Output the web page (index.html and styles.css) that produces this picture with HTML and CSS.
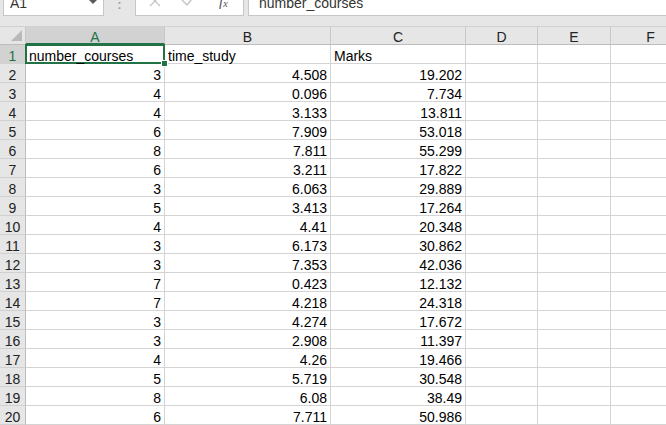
FILE: index.html
```html
<!DOCTYPE html>
<html>
<head>
<meta charset="utf-8">
<link rel="stylesheet" href="styles.css">
</head>
<body>
<div class="toolbar">
  <div class="namebox"><span class="nb-text">A1</span><span class="nb-arrow"></span></div>
  <div class="dots">:</div>
  <div class="btnbox">
    <svg class="ic ic-x" width="14" height="14" viewBox="0 0 14 14"><path d="M2 1 L12 11 M12 1 L2 11" stroke="#c4c4c4" stroke-width="1.3" fill="none"/></svg>
    <svg class="ic ic-ok" width="18" height="14" viewBox="0 0 18 14"><path d="M2 5 L7 10 L16 -1" stroke="#c4c4c4" stroke-width="1.5" fill="none"/></svg>
    <span class="fx">f<sub>x</sub></span>
  </div>
  <div class="formula"><span class="f-text">number_courses</span></div>
</div>
<div class="sheet">
  <div class="corner"><span class="tri"></span></div>
  <div class="ch sel">A</div>
  <div class="ch">B</div>
  <div class="ch">C</div>
  <div class="ch">D</div>
  <div class="ch">E</div>
  <div class="ch">F</div>

  <div class="rh sel">1</div>
  <div class="c t a1"><span class="selbox"><span class="handle"></span></span><span class="above">number_courses</span></div>
  <div class="c t">time_study</div>
  <div class="c t">Marks</div>
  <div class="c"></div><div class="c"></div><div class="c"></div>

  <div class="rh">2</div><div class="c">3</div><div class="c">4.508</div><div class="c">19.202</div><div class="c"></div><div class="c"></div><div class="c"></div>
  <div class="rh">3</div><div class="c">4</div><div class="c">0.096</div><div class="c">7.734</div><div class="c"></div><div class="c"></div><div class="c"></div>
  <div class="rh">4</div><div class="c">4</div><div class="c">3.133</div><div class="c">13.811</div><div class="c"></div><div class="c"></div><div class="c"></div>
  <div class="rh">5</div><div class="c">6</div><div class="c">7.909</div><div class="c">53.018</div><div class="c"></div><div class="c"></div><div class="c"></div>
  <div class="rh">6</div><div class="c">8</div><div class="c">7.811</div><div class="c">55.299</div><div class="c"></div><div class="c"></div><div class="c"></div>
  <div class="rh">7</div><div class="c">6</div><div class="c">3.211</div><div class="c">17.822</div><div class="c"></div><div class="c"></div><div class="c"></div>
  <div class="rh">8</div><div class="c">3</div><div class="c">6.063</div><div class="c">29.889</div><div class="c"></div><div class="c"></div><div class="c"></div>
  <div class="rh">9</div><div class="c">5</div><div class="c">3.413</div><div class="c">17.264</div><div class="c"></div><div class="c"></div><div class="c"></div>
  <div class="rh">10</div><div class="c">4</div><div class="c">4.41</div><div class="c">20.348</div><div class="c"></div><div class="c"></div><div class="c"></div>
  <div class="rh">11</div><div class="c">3</div><div class="c">6.173</div><div class="c">30.862</div><div class="c"></div><div class="c"></div><div class="c"></div>
  <div class="rh">12</div><div class="c">3</div><div class="c">7.353</div><div class="c">42.036</div><div class="c"></div><div class="c"></div><div class="c"></div>
  <div class="rh">13</div><div class="c">7</div><div class="c">0.423</div><div class="c">12.132</div><div class="c"></div><div class="c"></div><div class="c"></div>
  <div class="rh">14</div><div class="c">7</div><div class="c">4.218</div><div class="c">24.318</div><div class="c"></div><div class="c"></div><div class="c"></div>
  <div class="rh">15</div><div class="c">3</div><div class="c">4.274</div><div class="c">17.672</div><div class="c"></div><div class="c"></div><div class="c"></div>
  <div class="rh">16</div><div class="c">3</div><div class="c">2.908</div><div class="c">11.397</div><div class="c"></div><div class="c"></div><div class="c"></div>
  <div class="rh">17</div><div class="c">4</div><div class="c">4.26</div><div class="c">19.466</div><div class="c"></div><div class="c"></div><div class="c"></div>
  <div class="rh">18</div><div class="c">5</div><div class="c">5.719</div><div class="c">30.548</div><div class="c"></div><div class="c"></div><div class="c"></div>
  <div class="rh">19</div><div class="c">8</div><div class="c">6.08</div><div class="c">38.49</div><div class="c"></div><div class="c"></div><div class="c"></div>
  <div class="rh">20</div><div class="c">6</div><div class="c">7.711</div><div class="c">50.986</div><div class="c"></div><div class="c"></div><div class="c"></div>
</div>
</body>
</html>
```
FILE: styles.css
```css
html, body {
  margin: 0;
  padding: 0;
  width: 666px;
  height: 425px;
  overflow: hidden;
  background: #ffffff;
  font-family: "Liberation Sans", Arial, sans-serif;
  font-size: 14px;
  color: #000;
}

.toolbar {
  height: 27px;
  box-sizing: border-box;
  background: #e6e6e6;
  display: flex;
  align-items: flex-start;
  border-bottom: 1px solid #d0d0d0;
}

.namebox {
  margin-left: 3px;
  width: 101px;
  height: 16px;
  box-sizing: border-box;
  background: #fff;
  border: 1px solid #c6c6c6;
  border-top: none;
  display: flex;
  justify-content: space-between;
  overflow: hidden;
}
.nb-text {
  margin-left: 6px;
  margin-top: -4px;
  line-height: 14px;
  color: #333;
}
.nb-arrow {
  margin-right: 6px;
  width: 0;
  height: 0;
  border-left: 4px solid transparent;
  border-right: 4px solid transparent;
  border-top: 4px solid #5a5a5a;
}

.dots {
  width: 31px;
  text-align: center;
  color: #a0a0a0;
  font-size: 13px;
  line-height: 13px;
  margin-top: -2px;
  font-weight: bold;
}

.btnbox {
  width: 109px;
  height: 16px;
  box-sizing: border-box;
  background: #fff;
  border: 1px solid #c6c6c6;
  border-top: none;
  overflow: hidden;
  display: flex;
  align-items: flex-start;
}
.ic { display: block; margin-top: -5px; }
.ic-x { margin-left: 12px; }
.ic-ok { margin-left: 18px; }
.fx {
  margin-left: 21px;
  margin-top: -6px;
  font-family: "Liberation Serif", serif;
  font-style: italic;
  font-size: 15px;
  line-height: 15px;
  color: #555;
}
.fx sub { font-size: 10px; vertical-align: -1px; }

.formula {
  margin-left: 4px;
  flex: 1;
  height: 16px;
  box-sizing: border-box;
  background: #fff;
  border-left: 1px solid #c6c6c6;
  border-bottom: 1px solid #c6c6c6;
  overflow: hidden;
}
.f-text {
  display: block;
  margin-left: 10px;
  margin-top: -4px;
  line-height: 14px;
  color: #333;
}

.sheet {
  display: grid;
  grid-template-columns: 26px 139px 166px 135px 72px 73px 80px;
  grid-template-rows: 18px repeat(20, 19px);
}

.corner {
  background: #e6e6e6;
  border-right: 1px solid #c8c8c8;
  border-bottom: 1px solid #bcbcbc;
  box-sizing: border-box;
  position: relative;
}
.tri {
  position: absolute;
  right: 3px;
  bottom: 3px;
  width: 0;
  height: 0;
  border-left: 11px solid transparent;
  border-bottom: 11px solid #b9b9b9;
}

.ch {
  background: #e6e6e6;
  border-right: 1px solid #c8c8c8;
  border-bottom: 1px solid #bcbcbc;
  box-sizing: border-box;
  text-align: center;
  line-height: 15px;
  padding-top: 3px;
  color: #222;
}
.ch.sel {
  background: #d2d2d2;
  color: #217346;
  border-bottom: 2px solid #217346;
}

.rh {
  background: #e6e6e6;
  border-right: 1px solid #bcbcbc;
  border-bottom: 1px solid #d0d0d0;
  box-sizing: border-box;
  text-align: center;
  line-height: 15px;
  padding-top: 4px;
  color: #222;
}
.rh.sel {
  background: #d2d2d2;
  color: #217346;
}

.c {
  border-right: 1px solid #d4d4d4;
  border-bottom: 1px solid #d4d4d4;
  box-sizing: border-box;
  text-align: right;
  padding: 4px 3px 0 3px;
  line-height: 15px;
  white-space: nowrap;
}
.c.t { text-align: left; }

.a1 { position: relative; }
.above { position: relative; }
.selbox {
  position: absolute;
  left: -1px;
  top: -1px;
  right: -1px;
  bottom: -1px;
  border: 2px solid #217346;
}
.handle {
  position: absolute;
  right: -5px;
  bottom: -5px;
  width: 5px;
  height: 5px;
  background: #217346;
  border: 1px solid #fff;
}
```
